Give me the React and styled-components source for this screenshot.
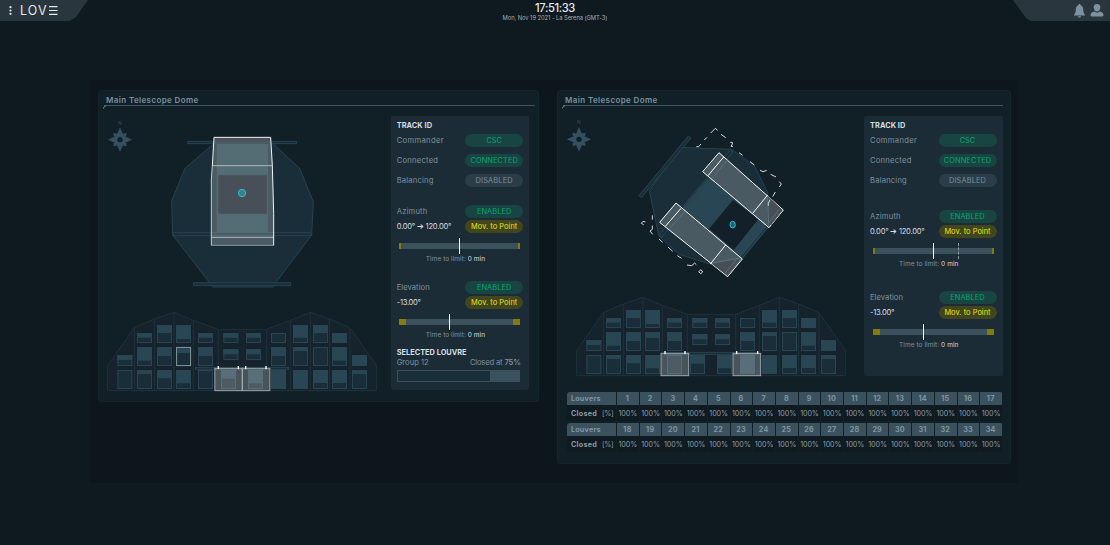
import React from 'react';
import styled, { createGlobalStyle } from 'styled-components';

const GlobalStyle = createGlobalStyle`
  * { box-sizing: border-box; }
  body {
    margin: 0;
    background: #0f1a20;
    color: #7f929d;
    font-family: Inter, "Open Sans", "Liberation Sans", sans-serif;
    overflow: hidden;
  }
`;

const Page = styled.div`
  width: 1110px;
  height: 545px;
  display: flex;
  flex-direction: column;
  background: #0f1a20;
`;

const TopBar = styled.header`
  height: 21px;
  display: flex;
  justify-content: space-between;
  align-items: flex-start;
`;

const Corner = styled.div`
  height: 21px;
  width: ${p => (p.$right ? '97px' : '88px')};
  display: flex;
  align-items: center;
  justify-content: ${p => (p.$right ? 'flex-end' : 'flex-start')};
  gap: ${p => (p.$right ? '4px' : '8px')};
  padding: ${p => (p.$right ? '0 6px 0 0' : '0 0 0 9px')};
  background: #2a363d;
  clip-path: ${p =>
    p.$right
      ? 'polygon(0 0, 100% 0, 100% 100%, 18px 100%, 13px 18px)'
      : 'polygon(0 0, 100% 0, 76px 17px, 70px 100%, 0 100%)'};
`;

const Clock = styled.div`
  display: flex;
  flex-direction: column;
  align-items: center;
  padding: 3px 0 0 9px;
  color: #e3e9ec;
`;

const Time = styled.div`
  font-size: 11.2px;
  line-height: 11px;
  font-weight: 500;
  letter-spacing: -0.4px;
`;

const DateLine = styled.div`
  font-size: 5.8px;
  line-height: 7px;
  color: #a3afb5;
  white-space: pre;
  letter-spacing: -0.06px;
`;

const Logo = styled.div`
  display: flex;
  align-items: center;
  gap: 1px;
  color: #e3e9ec;
  font-size: 12.4px;
  line-height: 12px;
  letter-spacing: 1.2px;
`;

const Workspace = styled.main`
  width: 928px;
  height: 403px;
  margin: 59px 0 0 90px;
  padding: 10px 7px 0 8px;
  display: flex;
  align-items: flex-start;
  justify-content: space-between;
  background: #0c161c;
`;

const Card = styled.section`
  width: ${p => p.$w}px;
  height: ${p => p.$h}px;
  padding: 5px 0 0 5px;
  border: 1px solid #14242b;
  border-radius: 3px;
  background: #111f26;
`;

const CardTitle = styled.h2`
  margin: 0 ${p => p.$end}px 0 0;
  height: 10px;
  padding-left: 2px;
  display: flex;
  align-items: center;
  font-size: 8px;
  line-height: 9px;
  font-weight: 600;
  letter-spacing: 0.38px;
  color: #7890a0;
  border-bottom: 1px solid #3f5562;
`;

const CardBody = styled.div`
  display: flex;
  align-items: flex-start;
  padding-top: 9px;
`;

const Drawings = styled.div`
  width: ${p => p.$w}px;
  flex: none;
  padding-left: ${p => p.$pad}px;
  svg { display: block; overflow: visible; }
`;

const FacadeSlot = styled.div`
  margin: ${p => p.$top}px 0 0 ${p => p.$left}px;
`;

const Side = styled.aside`
  width: 138.5px;
  height: ${p => p.$h}px;
  margin-top: 1px;
  padding: 5px 6px 0;
  border-radius: 2px;
  background: #1c2c36;
`;

const SideTitle = styled.div`
  font-size: 7.4px;
  line-height: 9px;
  font-weight: 700;
  letter-spacing: ${p => p.$ls || 0}px;
  color: #d3dce1;
  white-space: nowrap;
`;

const Row = styled.div`
  height: ${p => p.$h}px;
  display: flex;
  align-items: center;
  justify-content: space-between;
  font-size: 7.6px;
  letter-spacing: ${p => p.$ls || 0}px;
  color: ${p => (p.$bright ? '#d3dce1' : '#7f929d')};
  white-space: nowrap;
  b { font-weight: 600; }
`;

const tones = {
  green: ['#184542', '#06a673'],
  grey: ['#2b3d49', '#7b8e9a'],
  yellow: ['#42461f', '#ece300'],
};

const Pill = styled.span`
  width: 58px;
  height: 13px;
  border-radius: 7px;
  display: flex;
  align-items: center;
  justify-content: center;
  font-size: 7.4px;
  letter-spacing: ${p => p.$ls || 0}px;
  background: ${p => tones[p.$tone][0]};
  color: ${p => tones[p.$tone][1]};
`;

const Section = styled.div`
  padding-top: ${p => p.$top}px;
`;

const Closed = styled.span`
  margin-right: 2.5px;
  letter-spacing: -0.15px;
`;

const SliderBox = styled.div`
  position: relative;
  height: 16px;
  margin: 4px 3px 0 2.5px;
  display: flex;
  align-items: center;
`;

const Track = styled.div`
  width: 121px;
  height: 6px;
  background: #3b515e;
  border: solid #857b0b;
  border-width: 0 ${p => p.$cap}px;
`;

const Marker = styled.i`
  position: absolute;
  top: 0;
  left: ${p => p.$x}px;
  height: 16px;
  border-left: 1px ${p => (p.$dashed ? 'dashed #8c9aa2' : 'solid #fff')};
`;

const Limit = styled.div`
  height: 10px;
  text-align: center;
  padding-right: 9px;
  font-size: 6.5px;
  line-height: 11px;
  letter-spacing: 0.06px;
  span { color: #d3dce1; }
`;

const LouvreBar = styled.div`
  height: 12px;
  width: 123px;
  margin-top: 2px;
  border: 1px solid #3b515e;
  background: linear-gradient(90deg, #1a2e39 76%, #3b515e 76%);
`;

const Table = styled.div`
  width: 435.5px;
  margin: ${p => p.$top}px 0 0 4px;
  display: grid;
  grid-template-columns: 49px repeat(17, 21.7px);
  column-gap: 1.02px;
  border-radius: 3px;
  overflow: hidden;
`;

const Cell = styled.div`
  height: ${p => (p.$head ? 13 : 16)}px;
  display: flex;
  align-items: center;
  justify-content: ${p => (p.$first ? 'flex-start' : 'center')};
  padding: ${p => (p.$head ? 0 : 1)}px ${p => (p.$first || !p.$head ? 0 : 0.8)}px 0 ${p => (p.$first ? 4 : 0)}px;
  gap: 5px;
  font-size: 7.2px;
  font-weight: ${p => (p.$head ? 700 : 400)};
  letter-spacing: ${p => (p.$head ? 0.2 : p.$first ? 0.15 : -0.1)}px;
  background: ${p => (p.$head ? '#3b515e' : '#0f1b21')};
  color: ${p => (p.$head ? '#7f95a2' : '#8b9aa3')};
  white-space: nowrap;
  b { letter-spacing: 0.25px; }
  span { letter-spacing: -0.3px; }
`;

const WINDOWS = [
  [141, 114, 144, 128], [201, 90, 144, 114], [258, 90, 144, 132], [324, 114, 144, 128],
  [400, 114, 144, 128], [468, 114, 144, 128], [543, 114, 144, 114], [609, 90, 144, 128],
  [669, 90, 144, 114], [726, 114, 144, 144],
  [82, 180, 213, 195], [141, 156, 213, 197], [201, 156, 213, 183], [258, 156, 213, 174],
  [324, 156, 213, 183], [400, 162, 195, 178], [468, 162, 195, 178], [543, 156, 213, 183],
  [609, 156, 213, 168], [669, 156, 213, 156], [726, 156, 213, 197], [786, 180, 213, 213],
  [82, 225, 282, 225], [141, 225, 282, 237], [201, 225, 282, 250], [258, 225, 282, 265],
  [324, 225, 282, 227], [393, 225, 282, 251], [474, 225, 282, 265], [543, 225, 282, 282],
  [609, 225, 282, 282], [669, 225, 282, 264], [726, 225, 282, 264], [786, 225, 282, 237],
];

function Facade({ selected, doors, hinges }) {
  return (
    <svg width="275" height="81.67" viewBox="45 45 825 245">
      <polygon
        points="52,287 52,213 133,98 193,72 252,52 310,76 385,103 530,103 601,76 661,52 719,72 780,98 860,213 860,287"
        fill="#16232c" stroke="#1c323b" strokeWidth="3"
      />
      <path
        d="M133 98V287M193 72V287M252 52V287M310 76V287M385 103V216M530 103V216M601 76V287M661 52V287M719 72V287M780 98V287"
        stroke="#1c323b" strokeWidth="3"
      />
      {WINDOWS.map(([x, y, end, split], i) => {
        const on = i === selected;
        return (
          <g key={i}>
            <rect x={x + 1.5} y={y + 1.5} width="42" height={end - y - 3} fill="#1a2e39" stroke="#294654" strokeWidth="3" />
            {split > y && !on && <rect x={x} y={y} width="45" height={split - y} fill="#294654" />}
            {on && <rect x={x + 3} y={y + 3} width="40" height="15" fill="#294654" />}
            {on && <rect x={x + 2} y={y + 1} width="42" height="55" fill="none" stroke="#94a5ab" strokeWidth="2.5" />}
          </g>
        );
      })}
      <rect x="316" y="217" width="280" height="6" fill="#1a2e39" stroke="#294654" strokeWidth="2.5" />
      {doors.map(x => (
        <rect key={x} x={x} y="220" width="83" height="67" fill="#fff" fillOpacity="0.22" stroke="#9aa3a8" strokeWidth="3" />
      ))}
      {hinges.map(x => (
        <rect key={x} x={x - 2} y="213" width="4" height="9" fill="#fff" />
      ))}
    </svg>
  );
}

function Compass({ x, y }) {
  return (
    <g transform={`translate(${x} ${y})`}>
      <text x="0" y="-45" textAnchor="middle" fontSize="15" fill="#35505f">N</text>
      <g fill="#35505f">
        {[45, 135, 225, 315].map(a => (
          <path key={a} d="M0-28L6-20L0-10L-6-20Z" transform={`rotate(${a})`} />
        ))}
        <path d="M0-37L10-14Q12-12 14-10L37 0L14 10Q12 12 10 14L0 37L-10 14Q-12 12-14 10L-37 0L-14-10Q-12-12-10-14Z" />
      </g>
      <circle r="8" fill="#111f26" />
    </g>
  );
}

function DomeClosed() {
  return (
    <svg width="275" height="180" viewBox="45 105 825 540">
      <Compass x={90} y={179} />
      <g fill="#1a2e39" stroke="#274350" strokeWidth="3">
        <polygon points="380,183 285,265 245,363 248,465 358,607 368,621 549,621 558,607 665,465 670,366 629,265 540,183" />
        <rect x="293" y="184" width="327" height="7" />
        <rect x="249" y="458" width="413" height="9" />
        <rect x="311" y="608" width="291" height="9" />
      </g>
      <polygon points="372,172 542,172 547,257 551,400 551,496 364,496 364,300 367,257" fill="#4a5b64" />
      <path d="M372 172H542V184H372Z" fill="#4b525b" />
      <rect x="380" y="192" width="154" height="266" fill="#546c73" />
      <rect x="384" y="285" width="147" height="117" fill="#474f58" stroke="#50666e" strokeWidth="2" />
      <path d="M364 458H551M364 467H551" stroke="#546c75" strokeWidth="3" />
      <g stroke="#aeb9be" strokeWidth="3" fill="none">
        <path d="M367 257H548M364 472H551" />
        <path d="M364 496H551" stroke="#8b989f" />
        <path d="M364 496V300L367 257" stroke="#c5cdd0" />
        <path d="M367 257L372 172H542L547 257L551 400V496" stroke="#f0f3f4" />
      </g>
      <circle cx="456" cy="339" r="11" fill="#3f7f8b" stroke="#2bbfd3" strokeWidth="3" />
    </svg>
  );
}

function DomeOpen() {
  return (
    <svg width="275" height="180" viewBox="45 90 825 540">
      <Compass x={87} y={163} />
      <g fill="#1a2e39" stroke="#274350" strokeWidth="3">
        <polygon points="388,187 545,193 613,242 653,323 656,425 570,522 480,537 387,508 327,454 298,318" />
        <path d="M415 153L423 159L274 338L267 332Z" />
        <path d="M541 195L549 201L335 456L327 450Z" />
      </g>
      <polygon points="477,276 660,422 575,525 388,380" fill="#294654" />
      <polygon points="549,345 625,403 551,495 477,431" fill="#13202a" />
      <path d="M541 195L549 201L335 456L327 450Z" fill="none" stroke="#274350" strokeWidth="2" />
      <path d="M662 412L574 518" stroke="#1a2e39" strokeWidth="3" />
      <g fill="#495a63" stroke="#fff" strokeWidth="3">
        <polygon points="507,203 700,375 657,428 458,260" />
        <polygon points="378,354 577,522 533,575 329,412" />
      </g>
      <g fill="#474e55">
        <polygon points="654,333 697,375 656,425 653,410" />
        <polygon points="486,537 573,522 533,572" />
      </g>
      <g stroke="#5a727c" strokeWidth="3" fill="none">
        <path d="M653 335L656 420M656 414L688 373M663 420L695 378" />
        <path d="M486 534L570 519M526 563L563 519M533 570L572 523" />
        <path d="M533 224L488 278M404 380L359 430" />
      </g>
      <path d="M521 216L474 272M653 330L608 385M393 370L346 424M527 480L481 537" stroke="#fff" strokeWidth="3" />
      <g stroke="#d5dcdf" strokeWidth="3" fill="none">
        <path d="M439 185H446L453 177M463 165L471 157M482 144L496 130L503 136M513 148L527 158M541 172H547V177L543 184H549M567 203L578 211M600 230L613 240M630 256L639 260L650 256M662 268L678 276M688 290L694 297L688 306M676 321L668 335M660 344L655 355V362" />
        <path d="M307 391V404M307 422V433L300 438L308 448M286 411L279 409L274 415L281 419M327 462L338 472M354 486L368 499M382 512L395 520M411 540L425 542L434 534L439 539M446 560L453 554L458 561L452 566Z" />
      </g>
      <ellipse cx="548" cy="419" rx="8" ry="10" fill="#22616f" stroke="#2bbfd3" strokeWidth="3" />
    </svg>
  );
}

function Axis({ name, value, top, cap, marker, target, nameSpacing, valueSpacing }) {
  return (
    <Section $top={top}>
      <Row $h={15} $ls={nameSpacing}>{name}<Pill $tone="green" $ls={0.1}>ENABLED</Pill></Row>
      <Row $h={15.4} $bright $ls={valueSpacing}>{value}<Pill $tone="yellow" $ls={0.05}>Mov. to Point</Pill></Row>
      <SliderBox>
        <Track $cap={cap} />
        <Marker $x={marker} />
        {target && <Marker $x={target} $dashed />}
      </SliderBox>
      <Limit>Time to limit: <span>0 min</span></Limit>
    </Section>
  );
}

function TrackPanel({ height, first, second, target, children }) {
  return (
    <Side $h={height}>
      <SideTitle $ls={0.05}>TRACK ID</SideTitle>
      <Row $h={20.3} $ls={0.35}>Commander<Pill $tone="green">CSC</Pill></Row>
      <Row $h={20.3} $ls={0.25}>Connected<Pill $tone="green" $ls={0.1}>CONNECTED</Pill></Row>
      <Row $h={20.3} $ls={0.2}>Balancing<Pill $tone="grey" $ls={0.15}>DISABLED</Pill></Row>
      <Axis name="Azimuth" value="0.00° ➔ 120.00°" top={first} cap={2} marker={60} target={target} nameSpacing={0.2} valueSpacing={-0.25} />
      <Axis name="Elevation" value="-13.00°" top={second} cap={7} marker={50} nameSpacing={0.05} valueSpacing={-0.3} />
      {children}
    </Side>
  );
}

function LouverRows({ start, top }) {
  const numbers = Array.from({ length: 17 }, (_, i) => start + i);
  return (
    <Table $top={top}>
      <Cell $head $first>Louvers</Cell>
      {numbers.map(n => <Cell $head key={n}>{n}</Cell>)}
      <Cell $first><b>Closed</b> <span>[%]</span></Cell>
      {numbers.map(n => <Cell key={n}>100%</Cell>)}
    </Table>
  );
}

const Curl = styled.svg`
  display: block;
  margin: -1px 0 -3px -1px;
`;

function TitleCurl() {
  return (
    <Curl width="4" height="4" viewBox="0 0 4 4">
      <path d="M0.5 3.5V2.5L3 0.5" fill="none" stroke="#7890a0" strokeWidth="1" />
    </Curl>
  );
}

export default function App() {
  return (
    <>
      <GlobalStyle />
      <Page>
        <TopBar>
          <Corner>
            <svg width="3" height="9" viewBox="0 0 3 9" fill="#e3e9ec">
              <circle cx="1.5" cy="1.2" r="1.1" /><circle cx="1.5" cy="4.5" r="1.1" /><circle cx="1.5" cy="7.8" r="1.1" />
            </svg>
            <Logo>
              LOV
              <svg width="9" height="9" viewBox="0 0 9 9"><path d="M0 .6H8.5M0 4.5H8.5M0 8.4H8.5" stroke="#e3e9ec" strokeWidth="1.1" /></svg>
            </Logo>
          </Corner>
          <Clock>
            <Time>17:51:33</Time>
            <DateLine>Mon, Nov 19 2021 - La Serena (GMT-3)</DateLine>
          </Clock>
          <Corner $right>
            <svg width="13" height="14" viewBox="0 0 13 14" fill="#7d92a0">
              <path d="M6.5 0C7.3 0 7.5.6 7.6 1.2C9.4 1.8 10.2 3.5 10.2 5.5C10.2 8.5 11 9.7 12 10.7V11.5H1V10.7C2 9.7 2.8 8.5 2.8 5.5C2.8 3.5 3.6 1.8 5.4 1.2C5.5.6 5.7 0 6.5 0ZM4.8 12.2H8.2C8 14 5 14 4.8 12.2Z" />
            </svg>
            <svg width="14" height="13" viewBox="0 0 14 13" fill="#7d92a0">
              <path d="M7 0C9.4 0 10.6 1.6 10.3 3.8C10 6 8.8 7.5 7 7.5S4 6 3.7 3.8C3.4 1.6 4.6 0 7 0Z" />
              <path d="M4.3 7.6C6 9 8 9 9.7 7.6C12 8.2 13.5 9 13.5 11.2C13.5 12.2 12.5 12.6 11.5 12.6H2.5C1.5 12.6.5 12.2.5 11.2C.5 9 2 8.2 4.3 7.6Z" />
            </svg>
          </Corner>
        </TopBar>
        <Workspace>
          <Card $w={441} $h={312}>
            <CardTitle $end={3}>Main Telescope Dome</CardTitle>
            <TitleCurl />
            <CardBody>
              <Drawings $w={286.7} $pad={1}>
                <DomeClosed />
                <FacadeSlot $top={15} $left={0}>
                  <Facade selected={13} doors={[374.5, 456.5]} hinges={[385, 445, 467, 528]} />
                </FacadeSlot>
              </Drawings>
              <TrackPanel height={274} first={13.1} second={15.7}>
                <Section $top={8}>
                  <SideTitle>SELECTED LOUVRE</SideTitle>
                  <Row $h={11}><span>Group 12</span><Closed>Closed at <b>75%</b></Closed></Row>
                  <LouvreBar />
                </Section>
              </TrackPanel>
            </CardBody>
          </Card>
          <Card $w={454} $h={374}>
            <CardTitle $end={7}>Main Telescope Dome</CardTitle>
            <TitleCurl />
            <CardBody>
              <Drawings $w={301} $pad={2}>
                <DomeOpen />
                <FacadeSlot $top={0} $left={9.4}>
                  <Facade selected={-1} doors={[306, 522]} hinges={[318, 378, 533, 596]} />
                </FacadeSlot>
              </Drawings>
              <TrackPanel height={260} first={18.1} second={20.7} target={85} />
            </CardBody>
            <LouverRows start={1} top={15.5} />
            <LouverRows start={18} top={2} />
          </Card>
        </Workspace>
      </Page>
    </>
  );
}
